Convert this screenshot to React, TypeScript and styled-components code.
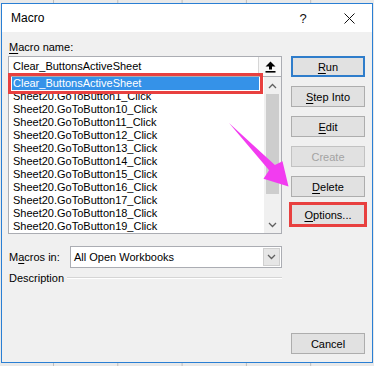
import styled, { createGlobalStyle } from "styled-components";

const GlobalStyle = createGlobalStyle`
  html, body {
    margin: 0;
    padding: 0;
  }
  body {
    background: #e9e9e9;
    font-family: "Liberation Sans", "Segoe UI", Arial, sans-serif;
    color: #000;
  }
`;

const Screen = styled.div`
  position: relative;
  width: 374px;
  height: 366px;
  padding: 3px 1px 0 1px;
  box-sizing: border-box;
  background-color: #e9e9e9;
  background-image: linear-gradient(90deg, #bdbdbd 1px, transparent 1px);
  background-size: 64.3px 100%;
  background-position: 53px 0;
`;

const Dialog = styled.div`
  width: 372px;
  height: 360px;
  box-sizing: border-box;
  border: 1px solid #2a7fd4;
  background: #f0f0f0;
  display: flex;
  flex-direction: column;
`;

const TitleBar = styled.div`
  height: 28px;
  flex-shrink: 0;
  background: #fff;
  display: flex;
  align-items: center;
  padding-left: 9px;
  font-size: 12px;
`;

const TitleText = styled.div`
  flex: 1;
`;

const TitleButton = styled.div`
  width: 46px;
  height: 28px;
  display: flex;
  align-items: center;
  justify-content: center;
  font-size: 13px;
  color: #111;
`;

const Body = styled.div`
  flex: 1;
  display: flex;
  gap: 9px;
  padding: 8px 7px 8px 6px;
`;

const LeftCol = styled.div`
  width: 274px;
  display: flex;
  flex-direction: column;
`;

const FieldLabel = styled.div`
  font-size: 11px;
  line-height: 14px;
  padding-left: 1px;
  margin-bottom: 2px;
`;

const Key = styled.u`
  text-underline-offset: 2px;
`;

const NameBox = styled.div`
  height: 21px;
  box-sizing: border-box;
  border: 1px solid #abadb3;
  background: #fff;
  display: flex;
`;

const NameText = styled.div`
  flex: 1;
  padding-left: 4px;
  font-size: 11px;
  line-height: 19px;
`;

const UploadButton = styled.div`
  width: 22px;
  border-left: 1px solid #d6d6d6;
  background: #f7f7f7;
  display: flex;
  align-items: center;
  justify-content: center;
`;

const ListBox = styled.div`
  height: 157px;
  box-sizing: border-box;
  border: 1px solid #abadb3;
  border-top: none;
  background: #fff;
  display: flex;
`;

const Items = styled.div`
  flex: 1;
  padding: 0 5px 0 3px;
`;

const Item = styled.div<{ $selected?: boolean }>`
  height: 13px;
  line-height: 13px;
  padding-left: 1px;
  font-size: 11px;
  white-space: nowrap;
  background: ${(p) => (p.$selected ? "#3592e8" : "transparent")};
  color: ${(p) => (p.$selected ? "#fff" : "#000")};
  outline: ${(p) => (p.$selected ? "3px solid #e8403f" : "none")};
  outline-offset: 1px;
`;

const ScrollBar = styled.div`
  width: 17px;
  background: #f0f0f0;
  display: flex;
  flex-direction: column;
`;

const ScrollArrow = styled.div`
  height: 17px;
  display: flex;
  align-items: center;
  justify-content: center;
`;

const Track = styled.div`
  flex: 1;
  padding: 0 2px;
`;

const Thumb = styled.div`
  height: 100px;
  background: #cdcdcd;
`;

const MacrosRow = styled.div`
  margin-top: 12px;
  display: flex;
  align-items: center;
`;

const RowLabel = styled.div`
  width: 61px;
  padding-left: 1px;
  font-size: 11px;
`;

const Select = styled.div`
  flex: 1;
  height: 22px;
  box-sizing: border-box;
  border: 1px solid #abadb3;
  background: #fff;
  display: flex;
`;

const SelectText = styled.div`
  flex: 1;
  padding-left: 3px;
  font-size: 11px;
  line-height: 20px;
`;

const DropArrow = styled.div`
  width: 15px;
  margin: 1px;
  border: 1px solid #cfcfcf;
  background: #e6e6e6;
  display: flex;
  align-items: center;
  justify-content: center;
`;

const DescRow = styled.div`
  margin-top: 3px;
  display: flex;
  align-items: center;
  gap: 3px;
  font-size: 11px;
  line-height: 14px;
  padding-left: 1px;
`;

const Rule = styled.div`
  flex: 1;
  border-top: 1px solid #d5d5d5;
  border-bottom: 1px solid #fff;
`;

const RightCol = styled.div`
  width: 74px;
  display: flex;
  flex-direction: column;
  gap: 9px;
  padding-top: 16px;
`;

const Button = styled.div<{ $default?: boolean; $disabled?: boolean; $highlight?: boolean }>`
  height: 21px;
  box-sizing: border-box;
  display: flex;
  align-items: center;
  justify-content: center;
  font-size: 11px;
  background: #e1e1e1;
  border: ${(p) =>
    p.$default ? "2px solid #2f7dcb" : p.$disabled ? "1px solid #c2c2c2" : "1px solid #adadad"};
  color: ${(p) => (p.$disabled ? "#a3a3a3" : "#000")};
  outline: ${(p) => (p.$highlight ? "3px solid #e8403f" : "none")};
  outline-offset: -1px;
  margin-top: ${(p) => (p.$highlight ? "-2px" : "0")};
`;

const CancelButton = styled(Button)`
  margin-top: auto;
`;

const Overlay = styled.svg`
  position: absolute;
  left: 0;
  top: 0;
  pointer-events: none;
`;

const Chevron = ({ down }: { down?: boolean }) => (
  <svg width="9" height="6" viewBox="0 0 9 6">
    <polyline
      points={down ? "1,1 4.5,4.5 8,1" : "1,5 4.5,1.5 8,5"}
      fill="none"
      stroke="#606060"
      strokeWidth="1.3"
    />
  </svg>
);

const items = [
  "Sheet20.GoToButton1_Click",
  "Sheet20.GoToButton10_Click",
  "Sheet20.GoToButton11_Click",
  "Sheet20.GoToButton12_Click",
  "Sheet20.GoToButton13_Click",
  "Sheet20.GoToButton14_Click",
  "Sheet20.GoToButton15_Click",
  "Sheet20.GoToButton16_Click",
  "Sheet20.GoToButton17_Click",
  "Sheet20.GoToButton18_Click",
  "Sheet20.GoToButton19_Click",
];

export default function App() {
  return (
    <Screen>
      <GlobalStyle />
      <Dialog>
        <TitleBar>
          <TitleText>Macro</TitleText>
          <TitleButton>?</TitleButton>
          <TitleButton>
            <svg width="11" height="11" viewBox="0 0 11 11">
              <path d="M0.5 0.5 L10.5 10.5 M10.5 0.5 L0.5 10.5" stroke="#111" strokeWidth="1" />
            </svg>
          </TitleButton>
        </TitleBar>

        <Body>
          <LeftCol>
            <FieldLabel>
              <Key>M</Key>acro name:
            </FieldLabel>
            <NameBox>
              <NameText>Clear_ButtonsActiveSheet</NameText>
              <UploadButton>
                <svg width="11" height="12" viewBox="0 0 11 12">
                  <path d="M5.5 0.5 L10.5 5.5 L7 5.5 L7 8.5 L4 8.5 L4 5.5 L0.5 5.5 Z" fill="#000" />
                  <rect x="0.5" y="10" width="10" height="1.6" fill="#000" />
                </svg>
              </UploadButton>
            </NameBox>
            <ListBox>
              <Items>
                <Item $selected>Clear_ButtonsActiveSheet</Item>
                {items.map((name) => (
                  <Item key={name}>{name}</Item>
                ))}
              </Items>
              <ScrollBar>
                <ScrollArrow>
                  <Chevron />
                </ScrollArrow>
                <Track>
                  <Thumb />
                </Track>
                <ScrollArrow>
                  <Chevron down />
                </ScrollArrow>
              </ScrollBar>
            </ListBox>

            <MacrosRow>
              <RowLabel>
                M<Key>a</Key>cros in:
              </RowLabel>
              <Select>
                <SelectText>All Open Workbooks</SelectText>
                <DropArrow>
                  <Chevron down />
                </DropArrow>
              </Select>
            </MacrosRow>

            <DescRow>
              Description
              <Rule />
            </DescRow>
          </LeftCol>

          <RightCol>
            <Button $default>
              <Key>R</Key>un
            </Button>
            <Button>
              <Key>S</Key>tep Into
            </Button>
            <Button>
              <Key>E</Key>dit
            </Button>
            <Button $disabled>Create</Button>
            <Button>
              <Key>D</Key>elete
            </Button>
            <Button $highlight>
              <Key>O</Key>ptions...
            </Button>
            <CancelButton>Cancel</CancelButton>
          </RightCol>
        </Body>
      </Dialog>

      <Overlay width="374" height="366" viewBox="0 0 374 366">
        <polygon
          points="229,123 274.9,164.9 282.5,161.2 288.5,186.5 263.5,178.8 269.1,170.3"
          fill="#f23cf0"
        />
      </Overlay>
    </Screen>
  );
}
